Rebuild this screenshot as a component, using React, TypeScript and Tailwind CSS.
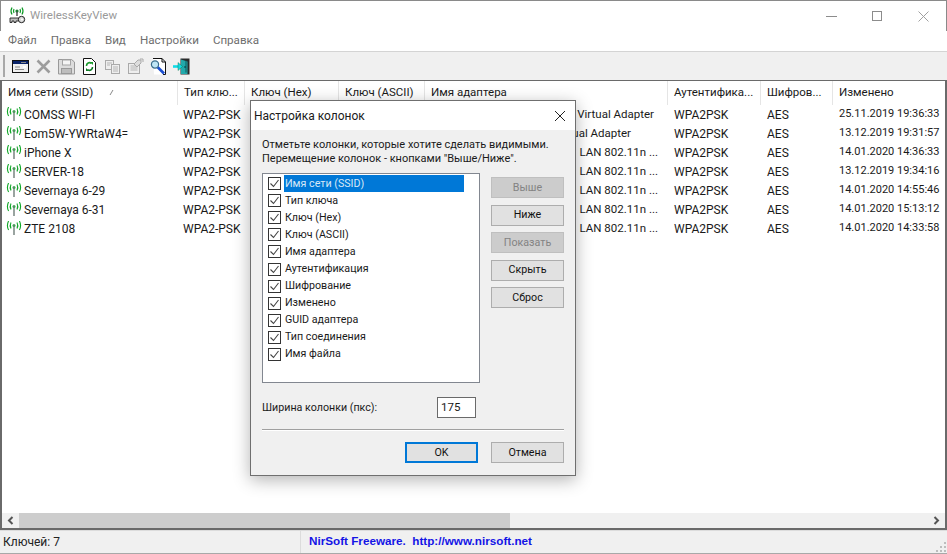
import React from 'react';

const font = "font-['Roboto','Liberation_Sans',sans-serif]";

const columns = [
  { label: 'Имя сети (SSID)', w: 'w-[176px]' },
  { label: 'Тип клю...', w: 'w-[67px]' },
  { label: 'Ключ (Hex)', w: 'w-[94px]' },
  { label: 'Ключ (ASCII)', w: 'w-[86px]' },
  { label: 'Имя адаптера', w: 'w-[243px]' },
  { label: 'Аутентифика...', w: 'w-[93px]' },
  { label: 'Шифров...', w: 'w-[72px]' },
  { label: 'Изменено', w: 'w-[114px]' },
];

const rows = [
  { ssid: 'COMSS WI-FI', adapter: 'Virtual Adapter', pad: 'pr-[14px]', date: '25.11.2019 19:36:33' },
  { ssid: 'Eom5W-YWRtaW4=', adapter: 'Virtual Adapter', pad: 'pr-[37px]', date: '13.12.2019 19:31:57' },
  { ssid: 'iPhone X', adapter: 'LAN 802.11n ...', pad: 'pr-[10px]', date: '14.01.2020 14:36:33' },
  { ssid: 'SERVER-18', adapter: 'LAN 802.11n ...', pad: 'pr-[10px]', date: '13.12.2019 19:34:16' },
  { ssid: 'Severnaya 6-29', adapter: 'LAN 802.11n ...', pad: 'pr-[10px]', date: '14.01.2020 14:55:46' },
  { ssid: 'Severnaya 6-31', adapter: 'LAN 802.11n ...', pad: 'pr-[10px]', date: '14.01.2020 15:13:12' },
  { ssid: 'ZTE 2108', adapter: 'LAN 802.11n ...', pad: 'pr-[10px]', date: '14.01.2020 14:33:58' },
];

const dialogColumns = [
  'Имя сети (SSID)', 'Тип ключа', 'Ключ (Hex)', 'Ключ (ASCII)', 'Имя адаптера', 'Аутентификация',
  'Шифрование', 'Изменено', 'GUID адаптера', 'Тип соединения', 'Имя файла',
];

const WifiIcon: React.FC = () => (
  <svg width="17" height="15" viewBox="0 0 17 15" fill="none" className="shrink-0">
    <path d="M8 5v9" stroke="#8f9a96" strokeWidth="1.8" />
    <circle cx="8" cy="4.5" r="1.5" fill="#4b9a5a" />
    <path d="M5 1.5Q3.4 4.5 5 7.5M11 1.5Q12.6 4.5 11 7.5" stroke="#12a829" strokeWidth="1.1" />
    <path d="M2.6 0Q.2 4.5 2.6 9M13.4 0Q15.8 4.5 13.4 9" stroke="#12a829" strokeWidth="1.1" />
  </svg>
);

const AppIcon: React.FC = () => (
  <svg width="18" height="18" viewBox="0 0 18 18" fill="none">
    <path d="M3 .5Q1 4 3 7.5M13 .5Q15 4 13 7.5M5 2Q4 4 5 6M11 2Q12 4 11 6" stroke="#0f9a27" strokeWidth="1.2" />
    <circle cx="8" cy="4" r="1.6" fill="#1a7a30" />
    <path d="M8 5v4" stroke="#444" strokeWidth="1.4" />
    <path d="M1 11h8.5v3H7v1.5H5V14H3v1.5H1z" fill="#bdbdbd" stroke="#222" strokeWidth=".9" />
    <circle cx="12.5" cy="12.5" r="3.2" fill="#d9d9d9" stroke="#222" />
    <circle cx="13" cy="12.5" r="1" fill="#fff" />
  </svg>
);

// toolbar icons, all on a 17px grid
const ToolIcon: React.FC<{ children: React.ReactNode }> = ({ children }) => (
  <div className="w-[23px] h-[22px] flex items-center justify-center shrink-0">
    <svg width="17" height="17" viewBox="0 0 17 17" fill="none">{children}</svg>
  </div>
);

const Toolbar: React.FC = () => (
  <div className="h-[28px] bg-[#f0f0f0] flex items-center pl-[3px] shrink-0">
    <div className="w-[2px] h-[22px] bg-[#a8a8a8] mr-[4px]" />
    <div className="flex">
      <ToolIcon>
        <rect x=".5" y="2.5" width="16" height="12" fill="#f0f0f0" stroke="#111" />
        <rect x="1" y="3" width="15" height="3" fill="#0a246a" />
        <path d="M9 4.5h5M3 9h5M3 11.5h9" stroke="#8a8a8a" />
        <rect x="11" y="8" width="3" height="2" fill="#fff" />
      </ToolIcon>
      <ToolIcon>
        <path d="M2.5 2.5l12 12M14.5 2.5l-12 12" stroke="#9c9c9c" strokeWidth="2.6" />
      </ToolIcon>
      <ToolIcon>
        <path d="M.5 1.5h13l3 2.5v12H.5z" fill="#dcdcdc" stroke="#999" />
        <rect x="4.5" y="2" width="8" height="5" fill="#f4f4f4" stroke="#a5a5a5" />
        <rect x="3.5" y="10.5" width="10" height="5" fill="#bdbdbd" stroke="#999" />
      </ToolIcon>
      <ToolIcon>
        <path d="M2.5 .5h8l4 4v12h-12z" fill="#fff" stroke="#111" />
        <path d="M5.5 8A3 3 0 0 1 10.5 5.5" stroke="#1a9a2c" strokeWidth="1.6" />
        <path d="M9 4h3v3z" fill="#1a9a2c" />
        <path d="M11.5 9A3 3 0 0 1 6.5 11.5" stroke="#0c7a22" strokeWidth="1.6" />
        <path d="M8 13H5v-3z" fill="#0c7a22" />
      </ToolIcon>
      <ToolIcon>
        <rect x="1.5" y="2.5" width="8" height="9" fill="#eee" stroke="#aaa" />
        <rect x="7.5" y="6.5" width="8" height="9" fill="#eee" stroke="#aaa" />
        <path d="M3 5h5M3 7h3M9 9h5M9 11h5M9 13h5" stroke="#b5b5b5" />
      </ToolIcon>
      <ToolIcon>
        <rect x="1.5" y="5.5" width="11" height="10" fill="#eee" stroke="#aaa" />
        <path d="M3.5 8h7M3.5 10h7M3.5 12h7" stroke="#b5b5b5" />
        <path d="M7 6l4-4h3v3l-4 4z" fill="#ddd" stroke="#aaa" />
        <path d="M13 1h3v3" stroke="#aaa" />
      </ToolIcon>
      <ToolIcon>
        <path d="M3 .5h9l3.5 3.5v12.5H4z" fill="#fff" />
        <path d="M3 .5h9l3.5 3.5v12.5H13M12 .5V4h3.5" stroke="#111" />
        <path d="M7.5 9l6.5 6.5" stroke="#1c4fd0" strokeWidth="2.6" />
        <circle cx="5" cy="6.5" r="3.6" fill="#bfe6f5" stroke="#3a6d8c" strokeWidth="1.2" />
      </ToolIcon>
      <ToolIcon>
        <rect x="7.5" y=".5" width="9" height="16" fill="#2a2a2a" />
        <path d="M8 1.5l6.5 2v12.5L8 16z" fill="#22a9ab" />
        <path d="M13 2.5v12" stroke="#0b5a5e" />
        <circle cx="12" cy="9" r=".8" fill="#062c2e" />
        <path d="M0 8.5h6" stroke="#12dbe6" strokeWidth="2.6" />
        <path d="M5 4.5l4.5 4-4.5 4z" fill="#12dbe6" stroke="#063" strokeWidth=".4" />
      </ToolIcon>
    </div>
  </div>
);

const ListHeader: React.FC = () => (
  <div className="flex h-[24px] shrink-0 bg-white text-[#1a1a1a] text-[11.5px]">
    {columns.map((c, i) => (
      <div key={c.label} className={`${c.w} shrink-0 flex items-center pl-[6px] border-r border-[#e5e5e5] relative`}>
        <span className="whitespace-nowrap">{c.label}</span>
        {i === 0 && <span className="absolute left-[106px] top-[9px] w-[4px] h-[5px] border-r border-[#888] -skew-x-[30deg]" />}
      </div>
    ))}
  </div>
);

const ListRow: React.FC<{ row: typeof rows[number] }> = ({ row }) => (
  <div className="flex h-[19px] items-center text-[#1a1a1a] whitespace-nowrap">
    <div className="w-[176px] shrink-0 flex items-center pl-[4px] gap-[1px]">
      <WifiIcon />
      <span>{row.ssid}</span>
    </div>
    <div className="w-[67px] shrink-0 pl-[5px]">WPA2-PSK</div>
    <div className="w-[94px] shrink-0" />
    <div className="w-[86px] shrink-0" />
    <div className={`w-[243px] shrink-0 flex justify-end text-[11.5px] ${row.pad}`}>{row.adapter}</div>
    <div className="w-[93px] shrink-0 pl-[6px]">WPA2PSK</div>
    <div className="w-[72px] shrink-0 pl-[6px]">AES</div>
    <div className="w-[114px] shrink-0 pl-[6px] text-[11px]">{row.date}</div>
  </div>
);

const DlgButton: React.FC<{ label: string; disabled?: boolean; primary?: boolean }> = ({ label, disabled, primary }) => (
  <div
    className={`w-[73px] h-[21px] flex items-center justify-center pt-px text-[10.7px] border ${
      primary
        ? 'border-2 border-[#0078d7] bg-[#e1e1e1] text-[#111]'
        : disabled
          ? 'border-[#bfbfbf] bg-[#cccccc] text-[#838383]'
          : 'border-[#adadad] bg-[#e1e1e1] text-[#111]'
    }`}
  >
    {label}
  </div>
);

const ColumnsDialog: React.FC = () => (
  <div className="absolute left-[250px] top-[100px] w-[326px] h-[376px] bg-[#f0f0f0] border border-[#6f6f6f] shadow-[0_4px_16px_rgba(0,0,0,0.3)] flex flex-col text-[#1a1a1a]">
    <div className="h-[29px] bg-white flex items-center justify-between pl-[3px] pr-[9px] shrink-0">
      <span className="text-[12px]">Настройка колонок</span>
      <svg width="12" height="12" viewBox="0 0 12 12" fill="none">
        <path d="M1 1l10 10M11 1L1 11" stroke="#222" />
      </svg>
    </div>
    <div className="flex-1 flex flex-col pl-[11px] pr-[11px]">
      <div className="mt-[8px] leading-[14px] text-[11px]">
        <div className="whitespace-nowrap">Отметьте колонки, которые хотите сделать видимыми.</div>
        <div className="whitespace-nowrap">Перемещение колонок - кнопками "Выше/Ниже".</div>
      </div>
      <div className="flex mt-[7px]">
        <div className="w-[218px] h-[210px] bg-white border border-[#828790] pt-[1px] pl-[5px] text-[10.7px]">
          {dialogColumns.map((c, i) => (
            <div key={c} className="flex items-center h-[17.1px]">
              <div className="w-[13px] h-[13px] bg-white border border-[#333] flex items-center justify-center shrink-0">
                <svg width="11" height="11" viewBox="0 0 11 11" fill="none">
                  <path d="M1.5 5.5l3 3 5-6.5" stroke="#444" strokeWidth="1.1" />
                </svg>
              </div>
              <div className={`ml-[3px] h-[17px] flex items-center pl-[1px] whitespace-nowrap ${i === 0 ? 'w-[180px] bg-[#0078d7] text-[#d8e8f6]' : ''}`}>
                {c}
              </div>
            </div>
          ))}
        </div>
        <div className="ml-[11px] mt-[4px] flex flex-col gap-[6.5px]">
          <DlgButton label="Выше" disabled />
          <DlgButton label="Ниже" />
          <DlgButton label="Показать" disabled />
          <DlgButton label="Скрыть" />
          <DlgButton label="Сброс" />
        </div>
      </div>
      <div className="flex items-center mt-[14px] h-[21px] text-[10.7px]">
        <span className="w-[175px] shrink-0 pt-px">Ширина колонки (пкс):</span>
        <div className="w-[39px] h-[21px] bg-white border border-[#6a6a6a] pl-[3px] flex items-center text-[11.5px]">175</div>
      </div>
      <div className="mt-[11px] w-[302px] h-[2px] bg-[#a0a0a0] border-b border-white" />
      <div className="flex justify-end gap-[13px] mt-[11px] w-[302px]">
        <DlgButton label="OK" primary />
        <DlgButton label="Отмена" />
      </div>
    </div>
  </div>
);

export default function App() {
  return (
    <div className={`relative w-[947px] h-[554px] overflow-hidden bg-white flex flex-col text-[12px] ${font}`}>
      <div className="h-[31px] bg-white flex items-center shrink-0 pl-[8px] pr-0 border-t border-x border-[#8a8a8a]">
        <AppIcon />
        <span className="ml-[3px] text-[11.5px] text-[#9a9a9a]">WirelessKeyView</span>
        <div className="ml-auto flex items-center">
          <div className="w-[46px] flex justify-center">
            <div className="w-[11px] h-px bg-[#8c8c8c]" />
          </div>
          <div className="w-[46px] flex justify-center">
            <div className="w-[10px] h-[10px] border border-[#8c8c8c]" />
          </div>
          <div className="w-[46px] flex justify-center">
            <svg width="11" height="11" viewBox="0 0 11 11" fill="none">
              <path d="M.5.5l10 10M10.5.5l-10 10" stroke="#a0a0a0" />
            </svg>
          </div>
        </div>
      </div>
      <div className="h-[20px] bg-white flex items-center pl-[8px] gap-[14px] text-[#6e6e6e] text-[11.6px] shrink-0">
        <span>Файл</span>
        <span>Правка</span>
        <span>Вид</span>
        <span>Настройки</span>
        <span>Справка</span>
      </div>
      <div className="h-px bg-[#d4d4d4] shrink-0" />
      <Toolbar />
      <div className="flex-1 min-h-0 flex flex-col border-t border-x-2 border-b-2 border-[#6a6a6a] bg-white overflow-hidden">
        <ListHeader />
        <div className="flex-1 min-h-0">
          {rows.map((r) => <ListRow key={r.ssid} row={r} />)}
        </div>
        <div className="h-[15px] bg-[#f0f0f0] flex items-center shrink-0">
          <svg width="17" height="15" viewBox="0 0 17 15" fill="none" className="shrink-0">
            <path d="M10.5 4l-3.5 3.5 3.5 3.5" stroke="#555" strokeWidth="2" />
          </svg>
          <div className="w-[491px] h-[15px] bg-[#cdcdcd]" />
          <div className="flex-1" />
          <svg width="17" height="15" viewBox="0 0 17 15" fill="none" className="shrink-0">
            <path d="M6.5 4l3.5 3.5-3.5 3.5" stroke="#555" strokeWidth="2" />
          </svg>
        </div>
      </div>
      <div className="h-[24px] bg-[#f0f0f0] flex items-stretch shrink-0 border-t border-[#dcdcdc] border-b border-b-[#a8a8a8] relative">
        <div className="w-[301px] pl-[3px] flex items-center text-[#222] border-r border-[#dcdcdc]">Ключей: 7</div>
        <div className="pl-[8px] flex items-center pb-[3px] font-bold text-[#1414e6] text-[11.7px] font-['Liberation_Sans',sans-serif] whitespace-pre">NirSoft Freeware.  http://www.nirsoft.net</div>
        <svg width="10" height="10" viewBox="0 0 10 10" className="absolute right-[1px] bottom-[1px]">
          <path d="M8 0h2v2H8zM4 4h2v2H4zM8 4h2v2H8zM0 8h2v2H0zM4 8h2v2H4zM8 8h2v2H8z" fill="#bdbdbd" />
        </svg>
      </div>
      <ColumnsDialog />
    </div>
  );
}
